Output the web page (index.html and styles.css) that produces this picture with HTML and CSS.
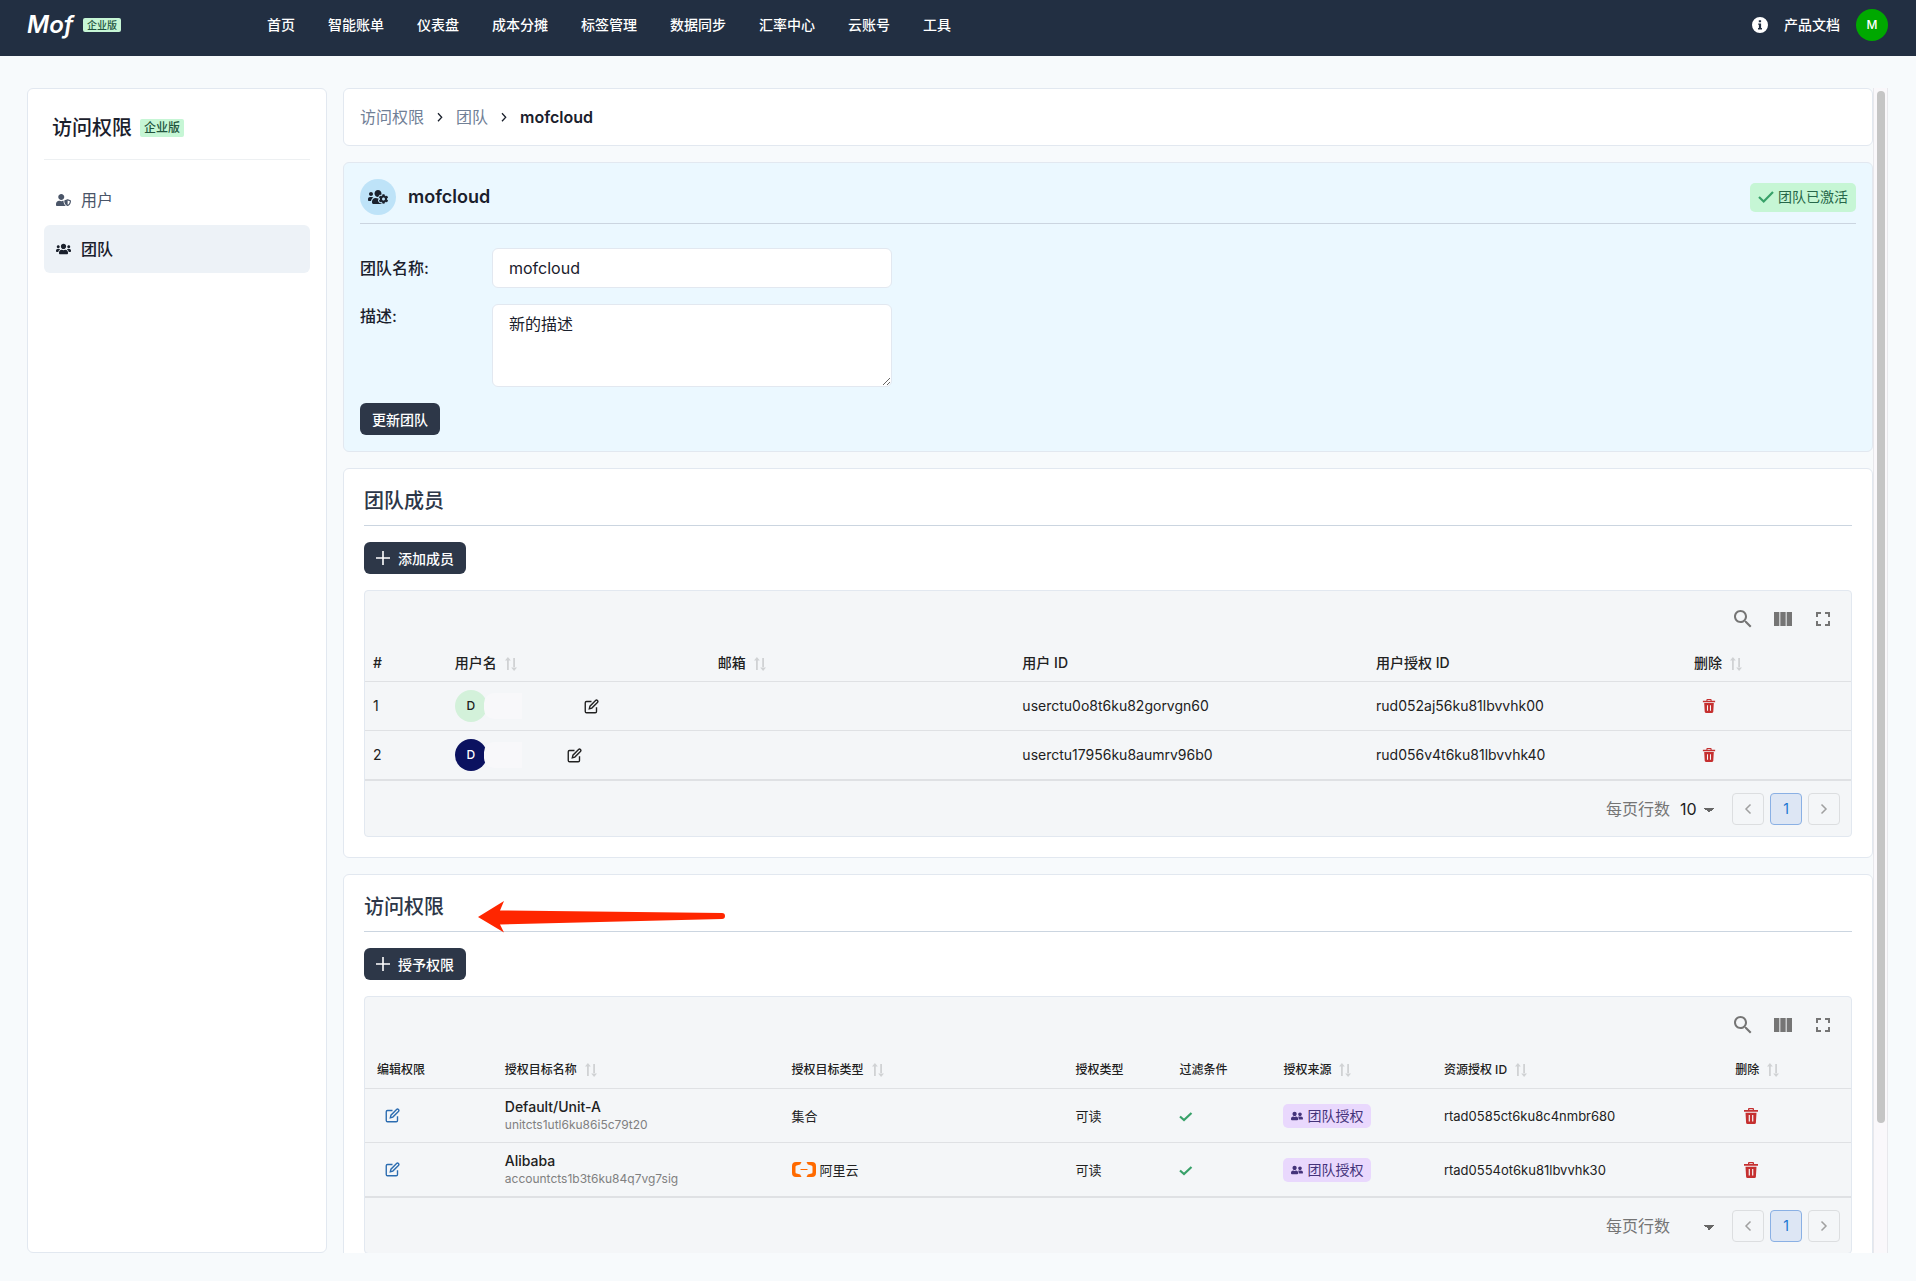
FILE: index.html
```html
<!DOCTYPE html>
<html lang="zh-CN">
<head>
  <meta charset="UTF-8">
  <meta name="viewport" content="width=device-width, initial-scale=1.0">
  <title>Mof 访问权限</title>
  <link rel="stylesheet" href="styles.css">
</head>
<body>
  <!-- 图标 -->
  <svg class="sprite" aria-hidden="true">
    <symbol id="i-users" viewBox="0 0 640 512"><path d="M96 224c35.3 0 64-28.7 64-64s-28.7-64-64-64-64 28.7-64 64 28.7 64 64 64zm448 0c35.3 0 64-28.7 64-64s-28.7-64-64-64-64 28.7-64 64 28.7 64 64 64zm32 32h-64c-17.6 0-33.5 7.1-45.1 18.6 40.3 22.1 68.9 62 75.1 109.4h66c17.7 0 32-14.3 32-32v-32c0-35.3-28.7-64-64-64zm-256 0c61.9 0 112-50.1 112-112S381.9 32 320 32 208 82.1 208 144s50.1 112 112 112zm76.8 32h-8.3c-20.8 10-43.9 16-68.5 16s-47.6-6-68.5-16h-8.3C179.6 288 128 339.6 128 403.2V432c0 26.5 21.5 48 48 48h288c26.5 0 48-21.5 48-48v-28.8c0-63.6-51.6-115.2-115.2-115.2zm-223.7-13.4C161.5 263.1 145.6 256 128 256H64c-35.3 0-64 28.7-64 64v32c0 17.7 14.3 32 32 32h65.9c6.3-47.4 34.9-87.3 75.2-109.4z"/></symbol>
    <symbol id="i-user-shield" viewBox="0 0 640 512"><path d="M622.3 271.1l-115.2-45c-4.1-1.6-12.6-3.7-22.2 0l-115.2 45c-10.7 4.2-17.7 14-17.7 24.9 0 111.6 68.7 188.8 132.9 213.9 9.6 3.7 18 1.6 22.2 0C558.4 489.9 640 420.5 640 296c0-10.9-7-20.7-17.7-24.9zM496 462.4V273.3l95.5 37.3c-5.6 87.1-60.9 135.4-95.5 151.8zM224 256c70.7 0 128-57.3 128-128S294.7 0 224 0 96 57.3 96 128s57.3 128 128 128zm96 40c0-2.5.8-4.8 1.1-7.2-2.5-.1-4.9-.8-7.5-.8h-16.7c-22.2 10.2-46.9 16-72.9 16s-50.6-5.8-72.9-16h-16.7C60.2 288 0 348.2 0 422.4V464c0 26.5 21.5 48 48 48h352c6.8 0 13.3-1.5 19.2-4-54-42.9-99.2-116.7-99.2-212z"/></symbol>
    <symbol id="i-users-cog" viewBox="0 0 640 512"><path d="M610.5 341.3c2.6-14.1 2.6-28.5 0-42.6l25.8-14.9c3-1.7 4.3-5.2 3.3-8.5-6.7-21.6-18.2-41.2-33.2-57.4-2.3-2.5-6-3.1-9-1.4l-25.8 14.9c-10.9-9.3-23.4-16.5-36.9-21.3v-29.8c0-3.4-2.4-6.4-5.7-7.1-22.3-5-45-4.8-66.2 0-3.3.7-5.7 3.7-5.7 7.1v29.8c-13.5 4.8-26 12-36.9 21.3l-25.8-14.9c-2.9-1.7-6.7-1.1-9 1.4-15 16.2-26.5 35.8-33.2 57.4-1 3.3.4 6.8 3.3 8.5l25.8 14.9c-2.6 14.1-2.6 28.5 0 42.6l-25.8 14.9c-3 1.7-4.3 5.2-3.3 8.5 6.7 21.6 18.2 41.1 33.2 57.4 2.3 2.5 6 3.1 9 1.4l25.8-14.9c10.9 9.3 23.4 16.5 36.9 21.3v29.8c0 3.4 2.4 6.4 5.7 7.1 22.3 5 45 4.8 66.2 0 3.3-.7 5.7-3.7 5.7-7.1v-29.8c13.5-4.8 26-12 36.9-21.3l25.8 14.9c2.9 1.7 6.7 1.1 9-1.4 15-16.2 26.5-35.8 33.2-57.4 1-3.3-.4-6.8-3.3-8.5l-25.8-14.9zM496 368.5c-26.8 0-48.5-21.8-48.5-48.5s21.8-48.5 48.5-48.5 48.5 21.8 48.5 48.5-21.7 48.5-48.5 48.5zM96 224c35.3 0 64-28.7 64-64s-28.7-64-64-64-64 28.7-64 64 28.7 64 64 64zm224 32c1.9 0 3.7-.5 5.6-.6 8.3-21.7 20.5-42.1 36.3-59.2 7.4-8 17.9-12.6 28.9-12.6 6.9 0 13.7 1.8 19.6 5.3l7.9 4.6c.8-.5 1.6-.9 2.4-1.4 7-14.6 11.2-30.8 11.2-48 0-61.9-50.1-112-112-112S208 82.1 208 144c0 61.9 50.1 112 112 112zm105.2 194.5c-2.3-1.2-4.6-2.6-6.8-3.9-8.2 4.8-15.3 9.8-27.5 9.8-10.9 0-21.4-4.6-28.9-12.6-18.3-19.8-32.3-43.9-40.2-69.6-10.7-34.5 24.9-49.7 25.8-50.3-.1-2.6-.1-5.2 0-7.8l-7.9-4.6c-3.8-2.2-7-5-9.8-8.1-3.3.2-6.5.6-9.8.6-24.6 0-47.6-6-68.5-16h-8.3C179.6 288 128 339.6 128 403.2V432c0 26.5 21.5 48 48 48h255.4c-3.7-6-6.2-12.8-6.2-20.3v-9.2zM173.1 274.6C161.5 263.1 145.6 256 128 256H64c-35.3 0-64 28.7-64 64v32c0 17.7 14.3 32 32 32h65.9c6.3-47.4 34.9-87.3 75.2-109.4z"/></symbol>
    <symbol id="i-friends" viewBox="0 0 640 512"><path d="M192 256c61.9 0 112-50.1 112-112S253.9 32 192 32 80 82.1 80 144s50.1 112 112 112zm76.8 32h-8.3c-20.8 10-43.9 16-68.5 16s-47.6-6-68.5-16h-8.3C51.6 288 0 339.6 0 403.2V432c0 26.5 21.5 48 48 48h288c26.5 0 48-21.5 48-48v-28.8c0-63.6-51.6-115.2-115.2-115.2zM480 256c53 0 96-43 96-96s-43-96-96-96-96 43-96 96 43 96 96 96zm48 32h-3.8c-13.9 4.8-28.6 8-44.2 8s-30.3-3.2-44.2-8H432c-20.4 0-39.2 5.9-55.7 15.4 24.4 26.3 39.7 61.2 39.7 99.8v38.4c0 2.2-.5 4.3-.6 6.4H592c26.5 0 48-21.5 48-48 0-61.9-50.1-112-112-112z"/></symbol>
    <symbol id="i-info" viewBox="0 0 16 16"><path fill-rule="evenodd" d="M8 0a8 8 0 1 0 0 16A8 8 0 0 0 8 0zM6.8 3.2h2.3v2H6.8zM6.2 6.4h2.9v4.7h.9v1.4H6v-1.4h.9V7.8h-.7z"/></symbol>
    <symbol id="i-chevron" viewBox="0 0 16 16"><path d="M6 4.3L9.700 8.300 6 12.300" fill="none" stroke="currentColor" stroke-width="1.300"/></symbol>
    <symbol id="i-page" viewBox="0 0 16 16"><path d="M5.500 3.500L10 8l-4.500 4.500" fill="none" stroke="currentColor" stroke-width="1.500"/></symbol>
    <symbol id="i-check" viewBox="0 0 16 16"><path d="M1 8L5.700 12.500 15 3" fill="none" stroke="currentColor" stroke-width="2.200"/></symbol>
    <symbol id="i-ok" viewBox="0 0 14 14"><path d="M1 7.500L5 11l7.500-7" fill="none" stroke="currentColor" stroke-width="2.200"/></symbol>
    <symbol id="i-plus" viewBox="0 0 14 14"><path d="M7 0v14M0 7h14" fill="none" stroke="currentColor" stroke-width="1.600"/></symbol>
    <symbol id="i-search" viewBox="0 0 24 24"><path d="M15.500 14h-.79l-.28-.27C15.410 12.590 16 11.110 16 9.500 16 5.910 13.090 3 9.500 3S3 5.910 3 9.500 5.910 16 9.500 16c1.610 0 3.090-.59 4.230-1.570l.27.28v.79l5 4.990L20.490 19l-4.990-5zm-6 0C7.010 14 5 11.990 5 9.500S7.010 5 9.500 5 14 7.010 14 9.500 11.990 14 9.500 14z"/></symbol>
    <symbol id="i-columns" viewBox="0 0 24 24"><path d="M14.670 5v14H9.330V5h5.340zm1 14H21V5h-5.330v14zm-7.340 0V5H3v14h5.330z"/></symbol>
    <symbol id="i-full" viewBox="0 0 24 24"><path d="M7 14H5v5h5v-2H7v-3zm-2-4h2V7h3V5H5v5zm12 7h-3v2h5v-5h-2v3zM14 5v2h3v3h2V5h-5z"/></symbol>
    <symbol id="i-sort" viewBox="0 0 12 14"><path d="M2 3h1.800v10H2zM0 3.500L2.900 0l2.900 3.500zM8.200 1H10v10H8.200zM6.200 10.500L9.100 14l2.900-3.500z"/></symbol>
    <symbol id="i-edit" viewBox="0 0 24 24"><path d="M12 4H4a2 2 0 0 0-2 2v14a2 2 0 0 0 2 2h14a2 2 0 0 0 2-2v-7M18.500 2.500a2.120 2.120 0 0 1 3 3L12.500 14.500l-4 1 1-4 9-9z" fill="none" stroke="currentColor" stroke-width="2.200"/></symbol>
    <symbol id="i-trash" viewBox="0 0 14 16"><path fill-rule="evenodd" d="M4 2V1a1 1 0 0 1 1-1h4a1 1 0 0 1 1 1v1h4v1.700H0V2zM5.300 1.200V2h3.400v-.8zM1.500 4.700h11l-.6 10a1.400 1.400 0 0 1-1.400 1.300h-7a1.400 1.400 0 0 1-1.400-1.300zM4.700 7v6.500h1.200V7zM8.100 7v6.500h1.200V7z"/></symbol>
  </svg>

  <header class="topbar">
    <a class="logo" href="#">Mof</a>
    <span class="tag tag-small">企业版</span>
    <nav class="nav">
      <a href="#">首页</a>
      <a href="#">智能账单</a>
      <a href="#">仪表盘</a>
      <a href="#">成本分摊</a>
      <a href="#">标签管理</a>
      <a href="#">数据同步</a>
      <a href="#">汇率中心</a>
      <a href="#">云账号</a>
      <a href="#">工具</a>
    </nav>
    <div class="topbar-right">
      <svg class="icon16"><use href="#i-info"/></svg>
      <a href="#">产品文档</a>
      <span class="avatar avatar-me">M</span>
    </div>
  </header>

  <div class="layout">
    <aside class="sidebar">
      <h1 class="sidebar-title">访问权限 <span class="tag">企业版</span></h1>
      <a class="side-link" href="#"><svg><use href="#i-user-shield"/></svg>用户</a>
      <a class="side-link active" href="#"><svg><use href="#i-users"/></svg>团队</a>
    </aside>

    <main class="content">
      <nav class="card breadcrumb">
        <a href="#">访问权限</a>
        <svg class="icon16"><use href="#i-chevron"/></svg>
        <a href="#">团队</a>
        <svg class="icon16"><use href="#i-chevron"/></svg>
        <span class="current">mofcloud</span>
      </nav>

      <section class="card team">
        <div class="team-head">
          <span class="team-icon"><svg><use href="#i-users-cog"/></svg></span>
          <h2>mofcloud</h2>
          <span class="status"><svg class="icon16"><use href="#i-check"/></svg>团队已激活</span>
        </div>
        <form class="team-form">
          <div class="field">
            <label for="teamName">团队名称:</label>
            <input type="text" id="teamName" value="mofcloud">
          </div>
          <div class="field field-top">
            <label for="teamDesc">描述:</label>
            <textarea id="teamDesc">新的描述</textarea>
          </div>
          <button type="button" class="btn">更新团队</button>
        </form>
      </section>

      <section class="card panel">
        <h2 class="panel-title">团队成员</h2>
        <button type="button" class="btn"><svg><use href="#i-plus"/></svg>添加成员</button>
        <div class="grid-box">
          <div class="toolbar">
            <button type="button" aria-label="搜索"><svg><use href="#i-search"/></svg></button>
            <button type="button" aria-label="显示列"><svg><use href="#i-columns"/></svg></button>
            <button type="button" aria-label="全屏"><svg><use href="#i-full"/></svg></button>
          </div>
          <table class="members">
            <colgroup><col class="m-num"><col class="m-name"><col class="m-mail"><col class="m-id"><col class="m-auth"><col></colgroup>
            <thead>
              <tr>
                <th>#</th>
                <th>用户名<svg class="sort"><use href="#i-sort"/></svg></th>
                <th>邮箱<svg class="sort"><use href="#i-sort"/></svg></th>
                <th>用户 ID</th>
                <th>用户授权 ID</th>
                <th>删除<svg class="sort"><use href="#i-sort"/></svg></th>
              </tr>
            </thead>
            <tbody>
              <tr>
                <td>1</td>
                <td><div class="user"><span class="avatar avatar-green">D</span><span class="mask mask-long"></span><button type="button" class="icon-btn" aria-label="编辑"><svg><use href="#i-edit"/></svg></button></div></td>
                <td></td>
                <td>userctu0o8t6ku82gorvgn60</td>
                <td>rud052aj56ku81lbvvhk00</td>
                <td><button type="button" class="icon-btn del" aria-label="删除"><svg><use href="#i-trash"/></svg></button></td>
              </tr>
              <tr>
                <td>2</td>
                <td><div class="user"><span class="avatar avatar-navy">D</span><span class="mask"></span><button type="button" class="icon-btn" aria-label="编辑"><svg><use href="#i-edit"/></svg></button></div></td>
                <td></td>
                <td>userctu17956ku8aumrv96b0</td>
                <td>rud056v4t6ku81lbvvhk40</td>
                <td><button type="button" class="icon-btn del" aria-label="删除"><svg><use href="#i-trash"/></svg></button></td>
              </tr>
            </tbody>
          </table>
          <div class="pager">
            <label for="rows1">每页行数</label>
            <select id="rows1"><option>10</option><option>20</option></select>
            <button type="button" aria-label="上一页"><svg class="icon16 flip"><use href="#i-page"/></svg></button>
            <button type="button" class="page-on">1</button>
            <button type="button" aria-label="下一页"><svg class="icon16"><use href="#i-page"/></svg></button>
          </div>
        </div>
      </section>

      <section class="card panel">
        <h2 class="panel-title">访问权限</h2>
        <svg class="arrow" viewBox="0 0 248 32"><path d="M0 16L26 0l-4 9.500 222 2.500q3 0 3 3t-3 3L22 23.500l4 8z"/></svg>
        <button type="button" class="btn"><svg><use href="#i-plus"/></svg>授予权限</button>
        <div class="grid-box">
          <div class="toolbar">
            <button type="button" aria-label="搜索"><svg><use href="#i-search"/></svg></button>
            <button type="button" aria-label="显示列"><svg><use href="#i-columns"/></svg></button>
            <button type="button" aria-label="全屏"><svg><use href="#i-full"/></svg></button>
          </div>
          <table class="grants">
            <colgroup><col class="g-edit"><col class="g-name"><col class="g-type"><col class="g-short"><col class="g-short"><col class="g-from"><col class="g-id"><col></colgroup>
            <thead>
              <tr>
                <th>编辑权限</th>
                <th>授权目标名称<svg class="sort"><use href="#i-sort"/></svg></th>
                <th>授权目标类型<svg class="sort"><use href="#i-sort"/></svg></th>
                <th>授权类型</th>
                <th>过滤条件</th>
                <th>授权来源<svg class="sort"><use href="#i-sort"/></svg></th>
                <th>资源授权 ID<svg class="sort"><use href="#i-sort"/></svg></th>
                <th>删除<svg class="sort"><use href="#i-sort"/></svg></th>
              </tr>
            </thead>
            <tbody>
              <tr>
                <td><button type="button" class="icon-btn edit" aria-label="编辑"><svg><use href="#i-edit"/></svg></button></td>
                <td><div class="name">Default/Unit-A</div><div class="sub">unitcts1utl6ku86i5c79t20</div></td>
                <td>集合</td>
                <td>可读</td>
                <td><svg class="ok"><use href="#i-ok"/></svg></td>
                <td><span class="source"><svg><use href="#i-friends"/></svg>团队授权</span></td>
                <td>rtad0585ct6ku8c4nmbr680</td>
                <td><button type="button" class="icon-btn del" aria-label="删除"><svg><use href="#i-trash"/></svg></button></td>
              </tr>
              <tr>
                <td><button type="button" class="icon-btn edit" aria-label="编辑"><svg><use href="#i-edit"/></svg></button></td>
                <td><div class="name">Alibaba</div><div class="sub">accountcts1b3t6ku84q7vg7sig</div></td>
                <td><div class="vendor"><svg viewBox="0 0 24 15"><path d="M9.500 0H4a4 4 0 0 0-4 4v7a4 4 0 0 0 4 4h5.500L8.200 12.500 4.600 11.600a1.500 1.500 0 0 1-1.100-1.400V4.800a1.500 1.500 0 0 1 1.100-1.400l3.600-.9zM14.500 0H20a4 4 0 0 1 4 4v7a4 4 0 0 1-4 4h-5.500l1.300-2.500 3.600-.9a1.500 1.500 0 0 0 1.100-1.400V4.800a1.500 1.500 0 0 0-1.100-1.400l-3.600-.9zM8.500 7h7v1h-7z"/></svg>阿里云</div></td>
                <td>可读</td>
                <td><svg class="ok"><use href="#i-ok"/></svg></td>
                <td><span class="source"><svg><use href="#i-friends"/></svg>团队授权</span></td>
                <td>rtad0554ot6ku81lbvvhk30</td>
                <td><button type="button" class="icon-btn del" aria-label="删除"><svg><use href="#i-trash"/></svg></button></td>
              </tr>
            </tbody>
          </table>
          <div class="pager">
            <label for="rows2">每页行数</label>
            <select id="rows2"><option></option><option>10</option></select>
            <button type="button" aria-label="上一页"><svg class="icon16 flip"><use href="#i-page"/></svg></button>
            <button type="button" class="page-on">1</button>
            <button type="button" aria-label="下一页"><svg class="icon16"><use href="#i-page"/></svg></button>
          </div>
        </div>
      </section>
    </main>
    <div class="scrollbar"><div class="thumb"></div></div>
  </div>
</body>
</html>
```
FILE: styles.css
```css
* {
  box-sizing: border-box;
}

body {
  margin: 0;
  height: 100vh;
  display: flex;
  flex-direction: column;
  background-color: #f7fafc;
  color: #1a202c;
  font-family: Inter, "Noto Sans CJK SC", sans-serif;
  font-size: 16px;
  line-height: 24px;
}

a {
  color: inherit;
  text-decoration: none;
}

h1,
h2 {
  margin: 0;
}

button,
input,
select,
textarea {
  font-family: inherit;
  color: inherit;
}

button {
  cursor: pointer;
}

svg {
  fill: currentColor;
  flex: none;
}

.sprite {
  display: none;
}

.icon16 {
  width: 16px;
  height: 16px;
}

/* 顶部导航 */
.topbar {
  display: flex;
  align-items: center;
  flex: none;
  height: 56px;
  padding: 0 28px 6px 27px;
  background-color: #222f42;
  color: #fff;
  font-size: 14px;
  font-weight: 500;
}

.logo {
  width: 46px;
  font-size: 24px;
  font-style: italic;
  font-weight: 600;
}

.tag {
  padding: 0 4px;
  border-radius: 2px;
  background-color: #c6f6d5;
  color: #22543d;
  font-size: 12px;
  font-weight: 500;
  line-height: 18px;
}

.tag-small {
  margin-left: 10px;
  font-size: 10px;
  line-height: 14px;
}

.nav {
  display: flex;
  gap: 33px;
  margin-left: 146px;
}

.topbar-right {
  display: flex;
  align-items: center;
  gap: 16px;
  margin-left: auto;
}

.avatar {
  display: flex;
  align-items: center;
  justify-content: center;
  flex: none;
  width: 32px;
  height: 32px;
  border-radius: 50%;
  font-size: 12px;
  font-weight: 500;
}

.avatar-me {
  background-color: #00a800;
}

.avatar-green {
  background-color: #d3f1da;
}

.avatar-navy {
  background-color: #0b1260;
  color: #fff;
}

/* 页面主体 */
.layout {
  display: flex;
  flex: 1;
  min-height: 0;
  padding: 32px 28px 28px 27px;
}

.sidebar {
  flex: none;
  width: 300px;
  margin-right: 16px;
  padding: 24px 16px;
  border: 1px solid #e2e8f0;
  border-radius: 6px;
  background-color: #fff;
}

.sidebar-title {
  display: flex;
  align-items: center;
  gap: 8px;
  padding: 0 8px 16px;
  margin-bottom: 16px;
  border-bottom: 1px solid #edf0f2;
  font-size: 20px;
  font-weight: 500;
  line-height: 30px;
}

.side-link {
  display: flex;
  align-items: center;
  gap: 10px;
  height: 48px;
  margin-bottom: 1px;
  padding: 0 12px;
  border-radius: 6px;
  color: #4a5568;
}

.side-link svg {
  width: 15px;
  height: 12px;
}

.side-link.active {
  background-color: #edf2f7;
  color: #1a202c;
  font-weight: 500;
}

.content {
  flex: 1;
  min-width: 0;
  overflow-y: auto;
  scrollbar-width: none;
}

.scrollbar {
  flex: none;
  width: 15px;
  padding: 3px 2px 3px 3px;
  border: solid #e8e8ec;
  border-width: 0 1px;
  background-color: #faf8fb;
}

.thumb {
  width: 8px;
  height: 89%;
  border-radius: 4px;
  background-color: #c5c5c5;
}

.card {
  margin-bottom: 16px;
  border: 1px solid #e2e8f0;
  border-radius: 6px;
  background-color: #fff;
}

.breadcrumb {
  display: flex;
  align-items: center;
  gap: 8px;
  padding: 16px;
  color: #718096;
}

.breadcrumb .icon16 {
  color: #1a202c;
}

.breadcrumb .current {
  color: #1a202c;
  font-weight: 600;
}

/* 团队信息 */
.team {
  padding: 16px;
  background-color: #ebf8ff;
}

.team-head {
  display: flex;
  align-items: center;
  gap: 12px;
  padding-bottom: 8px;
  border-bottom: 1px solid #cbd5e0;
}

.team-head h2 {
  font-size: 18px;
  font-weight: 600;
}

.team-icon {
  display: flex;
  align-items: center;
  justify-content: center;
  width: 36px;
  height: 36px;
  border-radius: 50%;
  background-color: #bee3f8;
}

.team-icon svg {
  width: 20px;
  height: 16px;
}

.status {
  display: flex;
  align-items: center;
  gap: 4px;
  height: 29px;
  margin-left: auto;
  padding: 0 8px;
  border-radius: 5px;
  background-color: #c6f6d5;
  color: #276749;
  font-size: 14px;
}

.status svg {
  color: #38a169;
}

.team-form {
  display: flex;
  flex-direction: column;
  align-items: flex-start;
  gap: 16px;
  margin-top: 24px;
}

.field {
  display: flex;
  align-items: center;
}

.field-top {
  align-items: flex-start;
}

.field label {
  width: 132px;
  font-weight: 500;
}

.field input,
.field textarea {
  width: 400px;
  height: 40px;
  padding: 0 16px;
  border: 1px solid #e2e8f0;
  border-radius: 6px;
  background-color: #fff;
  font-size: 16px;
}

.field textarea {
  height: 83px;
  padding: 8px 16px;
  line-height: 22px;
  resize: vertical;
}

.btn {
  display: flex;
  align-items: center;
  gap: 8px;
  height: 32px;
  padding: 0 12px;
  border: none;
  border-radius: 6px;
  background-color: #2d3748;
  color: #fff;
  font-size: 14px;
  font-weight: 500;
}

.btn svg {
  width: 14px;
  height: 14px;
}

/* 表格面板 */
.panel {
  position: relative;
  padding: 16px 20px 20px;
}

.panel-title {
  margin-bottom: 16px;
  padding-bottom: 8px;
  border-bottom: 1px solid #cbd5e0;
  color: #2d3748;
  font-size: 20px;
  font-weight: 500;
  line-height: 32px;
}

.arrow {
  position: absolute;
  top: 26px;
  left: 134px;
  width: 248px;
  height: 32px;
  fill: #ff2600;
}

.grid-box {
  margin-top: 16px;
  border: 1px solid #e2e8f0;
  border-radius: 4px;
  background-color: #f4f6f8;
  color: #212121;
}

.toolbar {
  display: flex;
  justify-content: flex-end;
  height: 56px;
  padding: 8px 8px 8px 0;
}

.toolbar button {
  width: 40px;
  height: 40px;
  padding: 8px;
  border: none;
  background: none;
  color: #757575;
}

.toolbar svg {
  display: block;
  width: 24px;
  height: 24px;
}

table {
  width: 100%;
  table-layout: fixed;
  border-collapse: separate;
  border-spacing: 0;
  border-bottom: 1px solid #dfe1e4;
  font-size: 14px;
  line-height: 20px;
}

th,
td {
  padding: 0 8px;
  border-bottom: 1px solid #dfe1e4;
  text-align: left;
  white-space: nowrap;
}

th {
  height: 35px;
  font-weight: 500;
}

.members th {
  padding-bottom: 2px;
}

.members td {
  height: 49px;
}

.m-num { width: 5.500%; }
.m-name { width: 17.700%; }
.m-mail { width: 20.500%; }
.m-id { width: 23.800%; }
.m-auth { width: 21.400%; }

.grants th,
.grants td {
  padding: 0 12px;
}

.grants th {
  height: 36px;
  padding-bottom: 2px;
  font-size: 12px;
}

.grants td {
  height: 54px;
  font-size: 13px;
}

.g-edit { width: 8.600%; }
.g-name { width: 19.300%; }
.g-type { width: 19.100%; }
.g-short { width: 7%; }
.g-from { width: 10.800%; }
.g-id { width: 19.600%; }

.sort {
  width: 12px;
  height: 14px;
  margin-left: 8px;
  vertical-align: -3px;
  color: #d0d2d4;
}

.user {
  display: flex;
  align-items: center;
}

/* 已隐藏的用户名 */
.mask {
  width: 38px;
  height: 26px;
  margin-left: -3px;
  margin-right: 37px;
  border-radius: 10px 0 0 10px;
  background-color: #f8f8fa;
}

.mask-long {
  margin-right: 54px;
}

.icon-btn {
  display: block;
  padding: 8px;
  border: none;
  background: none;
}

.icon-btn svg {
  display: block;
  width: 15px;
  height: 15px;
}

.icon-btn.edit {
  color: #2b6cb0;
}

.icon-btn.del {
  color: #c53030;
}

.members .del svg {
  width: 14px;
  height: 14px;
}

.grants .del svg {
  width: 16px;
  height: 16px;
}

.name {
  font-size: 14px;
  font-weight: 500;
  line-height: 18px;
}

.sub {
  color: #808080;
  font-size: 12px;
  line-height: 18px;
}

.ok {
  display: block;
  width: 14px;
  height: 14px;
  color: #38a169;
}

.source {
  display: inline-flex;
  align-items: center;
  gap: 4px;
  height: 24px;
  padding: 0 8px;
  border-radius: 5px;
  background-color: #e9d8fd;
  color: #44337a;
  font-size: 14px;
}

.source svg {
  width: 12px;
  height: 10px;
}

.vendor {
  display: flex;
  align-items: center;
  gap: 4px;
}

.vendor svg {
  width: 24px;
  height: 15px;
  fill: #ff6a00;
}

.pager {
  display: flex;
  align-items: center;
  justify-content: flex-end;
  gap: 6px;
  height: 55px;
  padding-right: 11px;
}

.pager label {
  color: #757575;
}

.pager select {
  width: 44px;
  height: 32px;
  margin-right: 6px;
  padding: 0 4px;
  border: none;
  appearance: none;
  background: linear-gradient(45deg, transparent 50%, #666 50%) 28px 15px / 5px 5px no-repeat,
    linear-gradient(-45deg, transparent 50%, #666 50%) 33px 15px / 5px 5px no-repeat;
  font-size: 16px;
}

.pager button {
  display: flex;
  align-items: center;
  justify-content: center;
  width: 32px;
  height: 32px;
  padding: 0;
  border: 1px solid #dcdee0;
  border-radius: 4px;
  background: none;
  color: #a0a0a0;
  font-size: 14px;
}

.pager .page-on {
  border-color: #8ab0e4;
  background-color: #dde6f4;
  color: #1976d2;
}

.flip {
  transform: rotate(180deg);
}
```
